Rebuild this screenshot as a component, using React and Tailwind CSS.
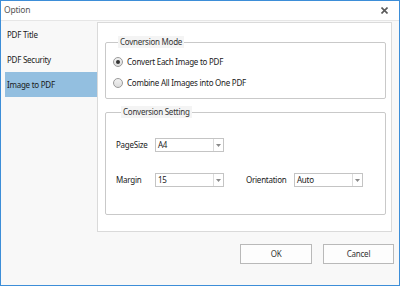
import { useState } from 'react';

const font = { fontFamily: '"Noto Sans", "Open Sans", sans-serif' };

function Radio({ checked, label, onClick }) {
  return (
    <div className="flex items-center h-[20px] cursor-default" onClick={onClick}>
      <span className="w-[10px] h-[10px] rounded-full border border-[#9a9a9a] bg-gradient-to-b from-[#f2f2f2] to-[#dcdcdc] flex items-center justify-center">
        {checked && <span className="w-[4px] h-[4px] rounded-full bg-[#333]" />}
      </span>
      <span className="ml-[4px] text-[8px] tracking-[-0.25px] text-[#1a1a1a]">{label}</span>
    </div>
  );
}

function Select({ value }) {
  return (
    <div className="w-[69px] h-[14px] border border-[#c4c4c4] bg-white flex">
      <span className="flex-1 pl-[2px] text-[8px] tracking-[-0.25px] leading-[12px] text-[#1a1a1a]">{value}</span>
      <span className="w-[10px] border-l border-[#dcdcdc] flex items-center justify-center">
        <svg width="5" height="3" viewBox="0 0 5 3">
          <path d="M0 0h5L2.5 3z" fill="#8a8a8a" />
        </svg>
      </span>
    </div>
  );
}

export default function App() {
  const [tab, setTab] = useState('image');
  const [mode, setMode] = useState('each');

  const tabs = [
    { id: 'title', label: 'PDF Title' },
    { id: 'security', label: 'PDF Security' },
    { id: 'image', label: 'Image to PDF' },
  ];

  return (
    <div className="w-[400px] h-[286px] border border-[#3d8ed8] bg-[#f8f8f8] flex flex-col" style={font}>
      {/* Title bar */}
      <div className="h-[20px] bg-white border-b border-[#e6e6e6] flex items-center justify-between pl-[3px] pr-[11px]">
        <span className="text-[8.5px] tracking-[-0.2px] text-[#555]">Option</span>
        <svg width="7" height="7" viewBox="0 0 7 7">
          <path d="M0.5 0.5L6.5 6.5M6.5 0.5L0.5 6.5" stroke="#5a5a5a" strokeWidth="1.6" />
        </svg>
      </div>

      {/* Body */}
      <div className="h-[211px] flex pt-[1px]">
        <div className="w-[96px] pl-[4px]">
          {tabs.map((t) => (
            <div
              key={t.id}
              onClick={() => setTab(t.id)}
              className={`h-[25px] flex items-center pl-[2px] text-[8px] tracking-[-0.25px] text-[#1a1a1a] ${
                tab === t.id ? 'bg-[#93bfe0]' : ''
              }`}
            >
              {t.label}
            </div>
          ))}
        </div>

        <div className="w-[295px] h-[210px] border border-[#dadada] bg-white pl-[7px] pr-[5px] pt-[13px]">
          <fieldset className="border border-[#c9c9c9] rounded-[2px] pl-[7px] pt-[4px] pb-[5px]">
            <legend className="ml-[5px] px-[2px] text-[8px] tracking-[-0.25px] leading-[12px] text-[#333] bg-[#f4f4f4]">Covnersion Mode</legend>
            <Radio checked={mode === 'each'} label="Convert Each Image to PDF" onClick={() => setMode('each')} />
            <div className="h-[1px]" />
            <Radio checked={mode === 'one'} label="Combine All Images into One PDF" onClick={() => setMode('one')} />
          </fieldset>

          <fieldset className="mt-[7px] border border-[#c9c9c9] rounded-[2px] pl-[10px] pt-[20px] pb-[27px]">
            <legend className="ml-[5px] px-[2px] text-[8px] tracking-[-0.25px] leading-[12px] text-[#333] bg-[#f4f4f4]">Conversion Setting</legend>
            <div className="flex items-center h-[14px]">
              <span className="w-[39px] text-[8px] tracking-[-0.25px] text-[#1a1a1a]">PageSize</span>
              <Select value="A4" />
            </div>
            <div className="flex items-center h-[14px] mt-[21px]">
              <span className="w-[39px] text-[8px] tracking-[-0.25px] text-[#1a1a1a]">Margin</span>
              <Select value="15" />
              <span className="ml-[22px] w-[48px] text-[8px] tracking-[-0.25px] text-[#1a1a1a]">Orientation</span>
              <Select value="Auto" />
            </div>
          </fieldset>
        </div>
      </div>

      {/* Footer */}
      <div className="flex-1 flex justify-end items-start pt-[12px] pr-[5px] gap-[11px]">
        <button className="w-[72px] h-[20px] border border-[#b9b9b9] bg-[#fdfdfd] text-[8px] tracking-[-0.25px] text-[#333]">OK</button>
        <button className="w-[71px] h-[20px] border border-[#b9b9b9] bg-[#fdfdfd] text-[8px] tracking-[-0.25px] text-[#333]">Cancel</button>
      </div>
    </div>
  );
}
